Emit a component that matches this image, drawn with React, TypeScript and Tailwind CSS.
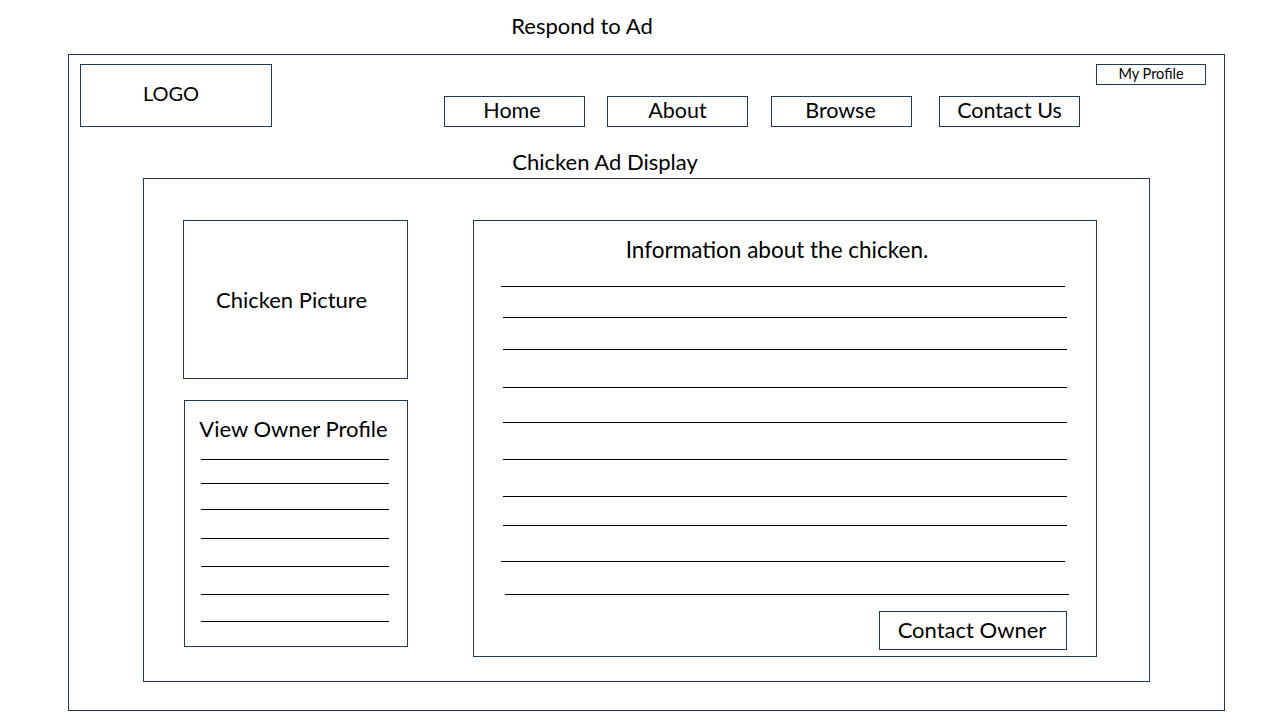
const navButtons = [
  { label: 'Home', className: 'ml-0 pr-[5px]' },
  { label: 'About', className: 'ml-[22px]' },
  { label: 'Browse', className: 'ml-[23px] pr-[2px]' },
  { label: 'Contact Us', className: 'ml-[27px]' },
];

// ruled lines in the info box: gap above + left offset, as drawn in the mock
const infoLines = [
  'mt-[7px] ml-[27px]',
  'mt-[30px] ml-[29px]',
  'mt-[31px] ml-[29px]',
  'mt-[37px] ml-[29px]',
  'mt-[34px] ml-[29px]',
  'mt-[36px] ml-[29px]',
  'mt-[36px] ml-[29px]',
  'mt-[28px] ml-[29px]',
  'mt-[35px] ml-[27px]',
  'mt-[32px] ml-[31px]',
];

const ownerLines = [
  'mt-[2px]',
  'mt-[23px]',
  'mt-[25px]',
  'mt-[28px]',
  'mt-[27px]',
  'mt-[27px]',
  'mt-[26px]',
];

export default function App() {
  return (
    <div className="w-[1280px] h-[720px] bg-white text-black font-['Lato','Open_Sans',sans-serif] overflow-hidden">
      {/* page title */}
      <div className="w-[1164px] h-[54px] flex items-center justify-center pb-[3px] text-[22px]">Respond to Ad</div>

      {/* outer frame */}
      <div className="ml-[68px] w-[1157px] h-[657px] border border-[#1f3864] flex flex-col">
        <div className="flex items-start">
          <div className="ml-[11px] mt-[9px] w-[192px] h-[63px] border border-[#1f3864] flex items-center justify-center pr-[10px] pb-[5px] text-[20px]">
            LOGO
          </div>
          <nav className="ml-[172px] mt-[41px] flex">
            {navButtons.map((b) => (
              <div
                key={b.label}
                className={`${b.className} w-[141px] h-[31px] border border-[#1f3864] flex items-center justify-center pb-[3px] text-[21.5px]`}
              >
                {b.label}
              </div>
            ))}
          </nav>
          <div className="ml-auto mr-[18px] mt-[9px] w-[110px] h-[21px] border border-[#1f3864] flex items-center justify-center pb-px text-[14.5px]">
            My Profile
          </div>
        </div>

        <div className="w-[1072px] h-[51px] pt-[20px] leading-[30px] text-center text-[22px]">Chicken Ad Display</div>

        {/* inner frame */}
        <div className="ml-[74px] w-[1007px] h-[504px] border border-[#1f3864] flex items-start">
          <div className="ml-[39px] mt-[41px] flex flex-col">
            <div className="w-[225px] h-[159px] border border-[#1f3864] flex items-center justify-center pr-[8px] text-[22px]">
              Chicken Picture
            </div>
            <div className="ml-px mt-[21px] w-[224px] h-[247px] border border-[#1f3864] flex flex-col">
              <div className="h-[56px] flex items-center justify-center pr-[5px] pb-px text-[22px]">View Owner Profile</div>
              {ownerLines.map((c, i) => (
                <div key={i} className={`${c} ml-[16px] w-[188px] h-px bg-black`} />
              ))}
            </div>
          </div>

          <div className="ml-[65px] mt-[41px] w-[624px] h-[437px] border border-[#1f3864] flex flex-col">
            <div className="h-[58px] flex items-center justify-center pr-[16px] text-[22.5px]">Information about the chicken.</div>
            {infoLines.map((c, i) => (
              <div key={i} className={`${c} w-[564px] h-px bg-black`} />
            ))}
            <div className="self-end mr-[29px] mt-[16px] w-[188px] h-[39px] border border-[#1f3864] flex items-center justify-center pr-[2px] pb-[3px] text-[22px]">
              Contact Owner
            </div>
          </div>
        </div>
      </div>
    </div>
  );
}
